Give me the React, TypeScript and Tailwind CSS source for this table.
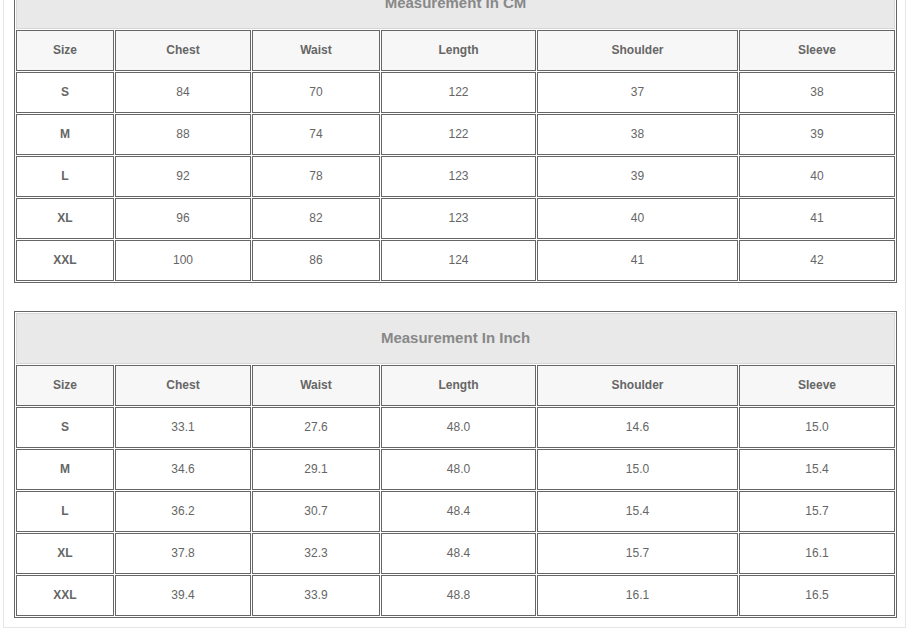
const headers = ["Size", "Chest", "Waist", "Length", "Shoulder", "Sleeve"];
const colWidths = ["w-[98px]", "w-[136px]", "w-[128px]", "w-[155px]", "w-[201px]", "w-[156px]"];

const cmRows = [
  ["S", "84", "70", "122", "37", "38"],
  ["M", "88", "74", "122", "38", "39"],
  ["L", "92", "78", "123", "39", "40"],
  ["XL", "96", "82", "123", "40", "41"],
  ["XXL", "100", "86", "124", "41", "42"],
];

const inchRows = [
  ["S", "33.1", "27.6", "48.0", "14.6", "15.0"],
  ["M", "34.6", "29.1", "48.0", "15.0", "15.4"],
  ["L", "36.2", "30.7", "48.4", "15.4", "15.7"],
  ["XL", "37.8", "32.3", "48.4", "15.7", "16.1"],
  ["XXL", "39.4", "33.9", "48.8", "16.1", "16.5"],
];

function SizeTable({ title, rows }: { title: string; rows: string[][] }) {
  return (
    <table className="w-[883px] table-fixed border-separate border-spacing-[1px] border border-[#666] text-center text-[12px] text-[#666]">
      <colgroup>
        {colWidths.map((w, i) => (
          <col key={i} className={w} />
        ))}
      </colgroup>
      <thead>
        <tr>
          <th
            colSpan={6}
            className="h-[51px] p-0 border border-[#d6d6d6] bg-[#e9e9e9] text-[15px] font-bold text-[#888]"
          >
            {title}
          </th>
        </tr>
        <tr>
          {headers.map((h) => (
            <th key={h} className="h-[41px] p-0 pb-px border border-[#666] bg-[#f7f7f7] font-bold">
              {h}
            </th>
          ))}
        </tr>
      </thead>
      <tbody>
        {rows.map((row) => (
          <tr key={row[0]}>
            {row.map((v, i) => (
              <td
                key={i}
                className={`h-[41px] p-0 pb-px border border-[#666] bg-white ${i === 0 ? "font-bold" : ""}`}
              >
                {v}
              </td>
            ))}
          </tr>
        ))}
      </tbody>
    </table>
  );
}

export default function App() {
  return (
    <div className="h-[635px] overflow-hidden bg-white font-['Liberation_Sans',Arial,sans-serif]">
      <div className="mt-[-35px] ml-[3px] w-[903px] border border-[#e6e6e6] pt-[10px] pb-[9px] pl-[10px] flex flex-col gap-[28px]">
        <SizeTable title="Measurement In CM" rows={cmRows} />
        <SizeTable title="Measurement In Inch" rows={inchRows} />
      </div>
    </div>
  );
}
